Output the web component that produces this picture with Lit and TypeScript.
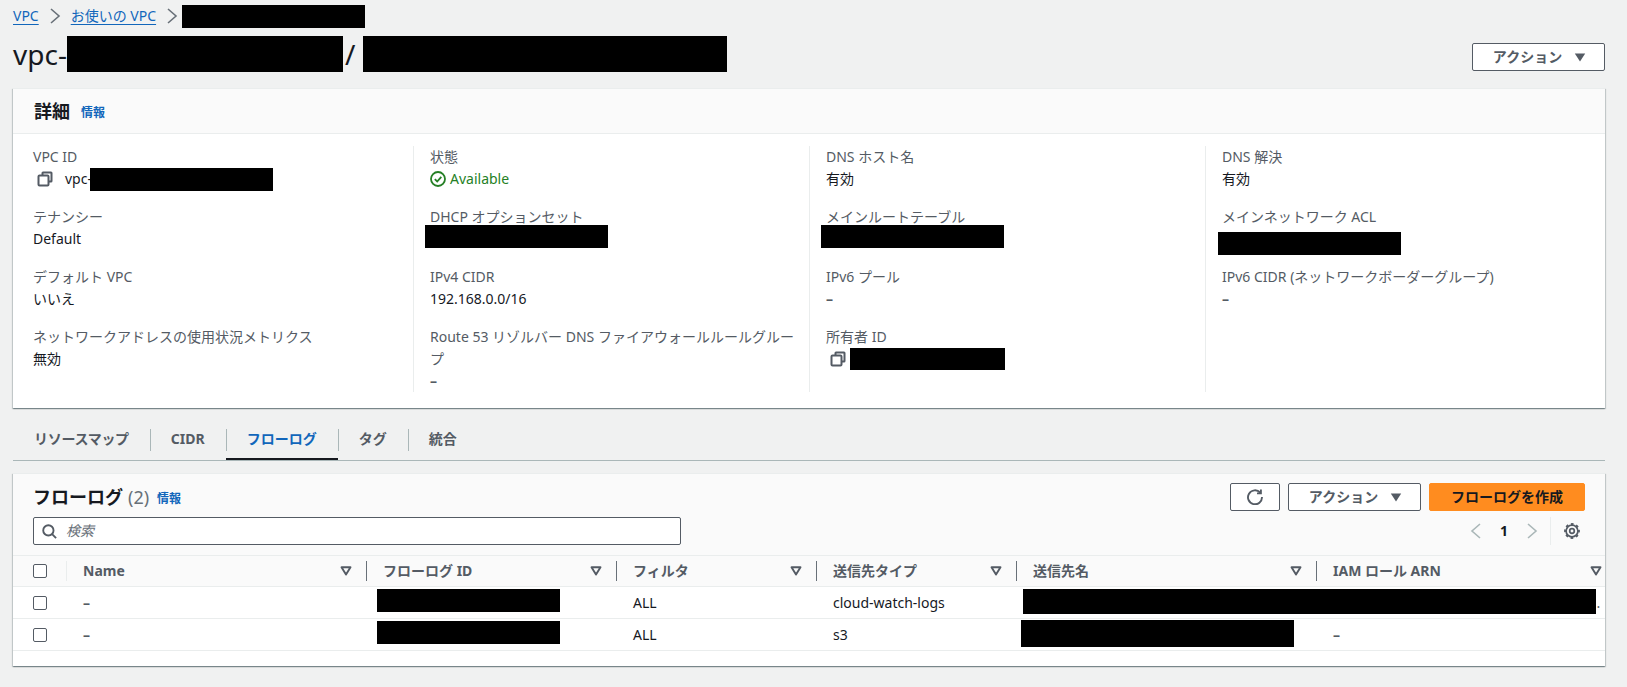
import { LitElement, html, css, svg, type TemplateResult } from 'lit';
import { customElement } from 'lit/decorators.js';

// black boxes that cover private values in the screenshot
const redact = (w: number, h: number, cls = ''): TemplateResult =>
  html`<span class="redact ${cls}" style="width:${w}px;height:${h}px"></span>`;

const chevron = (dir: 'left' | 'right'): TemplateResult => html`
  <svg class="chev" width="16" height="16" viewBox="0 0 16 16">
    <path d=${dir === 'right' ? 'M4 1 12 8 4 15' : 'M12 1 4 8 12 15'} fill="none" stroke="currentColor" stroke-width="1.6"/>
  </svg>`;

const copyIcon = html`
  <svg class="copy-icon" width="16" height="16" viewBox="0 0 16 16" fill="none" stroke="#545b64" stroke-width="2">
    <path d="M5.500 4V2a.5.5 0 0 1 .5-.5h8a.5.5 0 0 1 .5.500v8a.5.5 0 0 1-.5.500h-2"/>
    <rect x="1.500" y="4.500" width="10" height="10" rx="1"/>
  </svg>`;

const filterCaret = html`
  <svg class="filter" width="12" height="10" viewBox="0 0 12 10">
    <path d="M1.500 1.200h9L6 8.500z" fill="none" stroke="#545b64" stroke-width="1.900" stroke-linejoin="round"/>
  </svg>`;

const solidCaret = html`
  <svg class="solid-caret" width="12" height="9" viewBox="0 0 12 9"><path d="M.8.6h10.400L6 8.400z" fill="#545b64"/></svg>`;

const gearShape = svg`
  <circle cx="8" cy="8" r="5.900" fill="none" stroke="#545b64" stroke-width="1.700"/>
  <circle cx="8" cy="8" r="7" fill="none" stroke="#545b64" stroke-width="1.800" stroke-dasharray="2.700 2.798" stroke-dashoffset="1.350"/>
  <circle cx="8" cy="8" r="2.300" fill="none" stroke="#545b64" stroke-width="1.700"/>`;

interface Field {
  label: string;
  value: TemplateResult | string;
}

const dash = html`<span class="dash">–</span>`;

const detailColumns: Field[][] = [
  [
    { label: 'VPC ID', value: html`<div class="with-copy">${copyIcon}<span class="vpc-text">vpc-</span>${redact(183, 23, 'lower')}</div>` },
    { label: 'テナンシー', value: 'Default' },
    { label: 'デフォルト VPC', value: 'いいえ' },
    { label: 'ネットワークアドレスの使用状況メトリクス', value: '無効' },
  ],
  [
    {
      label: '状態',
      value: html`<div class="status">
        <svg width="16" height="16" viewBox="0 0 16 16" fill="none" stroke="#257f25" stroke-width="1.800">
          <circle cx="8" cy="8" r="7"/><path d="M4.800 8.200 7.200 10.500 11.300 5.800"/>
        </svg>
        <span>Available</span>
      </div>`,
    },
    { label: 'DHCP オプションセット', value: redact(183, 23, 'shift-up') },
    { label: 'IPv4 CIDR', value: '192.168.0.0/16' },
    { label: 'Route 53 リゾルバー DNS ファイアウォールルールグループ', value: dash },
  ],
  [
    { label: 'DNS ホスト名', value: '有効' },
    { label: 'メインルートテーブル', value: redact(183, 23, 'shift-up') },
    { label: 'IPv6 プール', value: dash },
    { label: '所有者 ID', value: html`<div class="with-copy">${copyIcon}${redact(155, 22, 'owner')}</div>` },
  ],
  [
    { label: 'DNS 解決', value: '有効' },
    { label: 'メインネットワーク ACL', value: redact(183, 23, 'shift-down') },
    { label: 'IPv6 CIDR (ネットワークボーダーグループ)', value: dash },
  ],
];

const tabs = ['リソースマップ', 'CIDR', 'フローログ', 'タグ', '統合'];
const tableHeads = ['Name', 'フローログ ID', 'フィルタ', '送信先タイプ', '送信先名', 'IAM ロール ARN'];

@customElement('app-root')
export class AppRoot extends LitElement {
  static styles = css`
    :host {
      display: block;
      width: 1627px;
      height: 687px;
      box-sizing: border-box;
      padding: 4px 22px 0 13px;
      background: #f0f1f1;
      color: #16191f;
      font-family: 'Noto Sans', 'Noto Sans CJK JP', sans-serif;
      font-size: 14px;
      line-height: 22px;
      overflow: hidden;
    }

    .redact {
      display: block;
      flex: none;
      background: #000;
    }

    /* breadcrumb + page title */
    .crumbs {
      display: flex;
      align-items: center;
      gap: 8px;
      height: 24px;
    }
    .crumbs a,
    .info {
      color: #1166bb;
    }
    .crumbs a {
      text-decoration: underline;
      text-underline-offset: 3px;
      text-decoration-thickness: 1px;
    }
    .crumbs .chev {
      color: #687078;
    }
    .crumbs .redact {
      margin-left: -6px;
    }
    .title-row {
      display: flex;
      align-items: flex-start;
      margin: 8px 0 16px;
      height: 36px;
    }
    h1 {
      display: flex;
      align-items: center;
      margin: 0;
      height: 36px;
      font-size: 28px;
      font-weight: 400;
      line-height: 36px;
    }
    h1 .slash {
      margin: 0 8px 0 2px;
    }
    .btn {
      display: flex;
      align-items: center;
      justify-content: center;
      gap: 12px;
      box-sizing: border-box;
      height: 28px;
      border: 1px solid #545b64;
      border-radius: 2px;
      background: #fff;
      color: #545b64;
      font-weight: 700;
    }
    .btn.action {
      width: 133px;
      padding-left: 2px;
    }
    .title-row .btn {
      margin: 7px 0 0 auto;
    }

    /* cards */
    .card {
      background: #fff;
      border-top: 1px solid #eaeded;
      box-shadow:
        0 1px 1px 0 rgba(0, 28, 36, 0.3),
        1px 1px 1px 0 rgba(0, 28, 36, 0.15),
        -1px 1px 1px 0 rgba(0, 28, 36, 0.15);
    }
    .card-title {
      font-size: 18px;
      font-weight: 700;
    }
    .info {
      font-size: 12px;
      font-weight: 700;
    }
    .details-head {
      display: flex;
      align-items: center;
      gap: 11px;
      box-sizing: border-box;
      height: 45px;
      padding-left: 21px;
      background: #fafafa;
      border-bottom: 1px solid #eaeded;
    }
    .details-head .info {
      margin-top: 4px;
    }
    .details-body {
      display: grid;
      grid-template-columns: 380px 396px 396px 1fr;
      padding: 12px 0 16px 19.5px;
    }
    .col {
      box-sizing: border-box;
      display: flex;
      flex-direction: column;
      gap: 16px;
      padding: 0 12px 0 16.5px;
      border-left: 1px solid #eaeded;
    }
    .col:first-child {
      padding-left: 0.5px;
      border-left: none;
    }
    .label {
      color: #545b64;
    }
    .value {
      display: flow-root;
      height: 22px;
    }
    .with-copy {
      display: flex;
      align-items: center;
      height: 22px;
    }
    .copy-icon {
      flex: none;
      margin-left: 4px;
    }
    .vpc-text {
      margin-left: 12px;
    }
    .owner {
      margin-left: 4px;
    }
    .lower {
      margin: 1px 0 0 -1.5px;
    }
    .shift-up {
      margin: -3px 0 0 -5.5px;
    }
    .shift-down {
      margin: 4px 0 0 -4.5px;
    }
    .status {
      display: flex;
      align-items: center;
      gap: 4px;
      color: #257f25;
    }
    .dash {
      font-weight: 700;
      color: #545b64;
    }

    /* tabs */
    .tabs {
      display: flex;
      align-items: stretch;
      height: 37px;
      margin-top: 15px;
      border-bottom: 1px solid #aab7b8;
    }
    .tab {
      position: relative;
      display: flex;
      align-items: center;
      padding: 0 21px;
      color: #545b64;
      font-weight: 700;
    }
    .tab:first-child {
      letter-spacing: -0.3px;
    }
    .tab + .tab::before {
      content: '';
      position: absolute;
      left: 0;
      top: 6px;
      height: 22px;
      width: 1px;
      background: #aab7b8;
    }
    .tab span {
      margin-top: -5px;
    }
    .tab.active {
      color: #1166bb;
      box-shadow: inset 0 -2px 0 #16191f;
    }

    /* flow log table */
    .logs {
      margin-top: 12px;
    }
    .logs-head {
      display: flex;
      flex-direction: column;
      gap: 6px;
      box-sizing: border-box;
      height: 81px;
      padding: 9px 20px 0 20px;
      background: #fafafa;
    }
    .logs-row {
      display: flex;
      align-items: center;
      height: 28px;
    }
    .count {
      margin-left: 5px;
      color: #687078;
      font-size: 18px;
    }
    .logs-row .info {
      margin: 4px 0 0 8px;
    }
    .toolbar {
      display: flex;
      gap: 8px;
      margin-left: auto;
    }
    .btn.refresh {
      width: 50px;
    }
    .btn.create {
      width: 156px;
      border-color: #ff8c1f;
      background: #ff8c1f;
      color: #16191f;
    }
    .search {
      display: flex;
      align-items: center;
      gap: 9px;
      box-sizing: border-box;
      width: 648px;
      height: 28px;
      padding-left: 8px;
      border: 1px solid #545b64;
      border-radius: 2px;
      background: #fff;
      color: #687078;
      font-style: italic;
    }
    .pager {
      display: flex;
      align-items: center;
      height: 28px;
      margin-left: auto;
      color: #aab7b8;
    }
    .pager .page {
      width: 40px;
      text-align: center;
      color: #16191f;
      font-weight: 700;
    }
    .pager .sep {
      width: 1px;
      height: 28px;
      margin: 0 13px 0 10px;
      background: #eaeded;
    }
    .pager .gear {
      margin-right: 5px;
    }
    .grid {
      display: grid;
      grid-template-columns: 52.5px 300px 250px 200px 200px 300px 1fr;
      align-items: center;
      box-sizing: border-box;
      border-bottom: 1px solid #eaeded;
    }
    .grid.thead {
      height: 32px;
      background: #fafafa;
      border-top: 1px solid #eaeded;
      color: #545b64;
      font-weight: 700;
    }
    .grid.row {
      height: 32px;
    }
    .th {
      display: flex;
      align-items: center;
      justify-content: space-between;
      height: 20px;
      padding: 0 14px 0 16.5px;
      border-left: 1px solid #687078;
    }
    .th.first {
      border-left-color: #eaeded;
    }
    .th:last-child {
      padding-right: 3px;
    }
    .td {
      display: flex;
      align-items: center;
      padding-left: 17.5px;
      white-space: nowrap;
    }
    .check-cell {
      padding-left: 20px;
    }
    .checkbox {
      display: block;
      box-sizing: border-box;
      width: 14px;
      height: 14px;
      border: 1px solid #545b64;
      border-radius: 2px;
      background: #fff;
    }
    .td .id {
      margin: -5px 0 0 -6.5px;
    }
    .td .dest1 {
      margin: -2px 0 0 -10.5px;
    }
    .td .dest2 {
      margin: -3px 0 0 -12.5px;
    }
    .dot {
      margin-left: 1px;
      color: #545b64;
    }
    .spacer {
      height: 15px;
    }
  `;

  private renderField(f: Field): TemplateResult {
    return html`<div class="field">
      <div class="label">${f.label}</div>
      <div class="value">${f.value}</div>
    </div>`;
  }

  private renderRow(dest: TemplateResult, type: string, iam: TemplateResult | string): TemplateResult {
    return html`<div class="grid row">
      <div class="check-cell"><span class="checkbox"></span></div>
      <div class="td">${dash}</div>
      <div class="td">${redact(183, 23, 'id')}</div>
      <div class="td">ALL</div>
      <div class="td">${type}</div>
      <div class="td">${dest}</div>
      <div class="td">${iam}</div>
    </div>`;
  }

  render(): TemplateResult {
    return html`
      <nav class="crumbs">
        <a>VPC</a>
        ${chevron('right')}
        <a>お使いの VPC</a>
        ${chevron('right')}
        ${redact(183, 23)}
      </nav>
      <div class="title-row">
        <h1>vpc-${redact(276, 36)}<span class="slash">/</span>${redact(364, 36)}</h1>
        <div class="btn action">アクション ${solidCaret}</div>
      </div>

      <section class="card">
        <div class="details-head">
          <span class="card-title">詳細</span>
          <span class="info">情報</span>
        </div>
        <div class="details-body">
          ${detailColumns.map(
            (col) => html`<div class="col">${col.map((f) => this.renderField(f))}</div>`
          )}
        </div>
      </section>

      <div class="tabs">
        ${tabs.map(
          (t) => html`<div class="tab ${t === 'フローログ' ? 'active' : ''}"><span>${t}</span></div>`
        )}
      </div>

      <section class="card logs">
        <div class="logs-head">
          <div class="logs-row">
            <span class="card-title">フローログ</span>
            <span class="count">(2)</span>
            <span class="info">情報</span>
            <div class="toolbar">
              <div class="btn refresh">
                <svg width="16" height="16" viewBox="0 0 16 16" fill="none" stroke="#545b64" stroke-width="1.900">
                  <path d="M13.200 3.600A7 7 0 1 0 15 8"/>
                  <path d="M13.900.5v3.900H10"/>
                </svg>
              </div>
              <div class="btn action">アクション ${solidCaret}</div>
              <div class="btn create">フローログを作成</div>
            </div>
          </div>
          <div class="logs-row">
            <div class="search">
              <svg width="15" height="15" viewBox="0 0 16 16" fill="none" stroke="#545b64" stroke-width="2">
                <circle cx="6.800" cy="6.800" r="5.500"/><path d="M10.800 10.800 15 15"/>
              </svg>
              <span>検索</span>
            </div>
            <div class="pager">
              ${chevron('left')}
              <span class="page">1</span>
              ${chevron('right')}
              <span class="sep"></span>
              <svg class="gear" width="16" height="16" viewBox="0 0 16 16">${gearShape}</svg>
            </div>
          </div>
        </div>
        <div class="grid thead">
          <div class="check-cell"><span class="checkbox"></span></div>
          ${tableHeads.map(
            (h, i) => html`<div class="th ${i === 0 ? 'first' : ''}"><span>${h}</span>${filterCaret}</div>`
          )}
        </div>
        ${this.renderRow(html`${redact(573, 25, 'dest1')}<span class="dot">.</span>`, 'cloud-watch-logs', '')}
        ${this.renderRow(redact(273, 27, 'dest2'), 's3', dash)}
        <div class="spacer"></div>
      </section>
    `;
  }
}

declare global {
  interface HTMLElementTagNameMap {
    'app-root': AppRoot;
  }
}
